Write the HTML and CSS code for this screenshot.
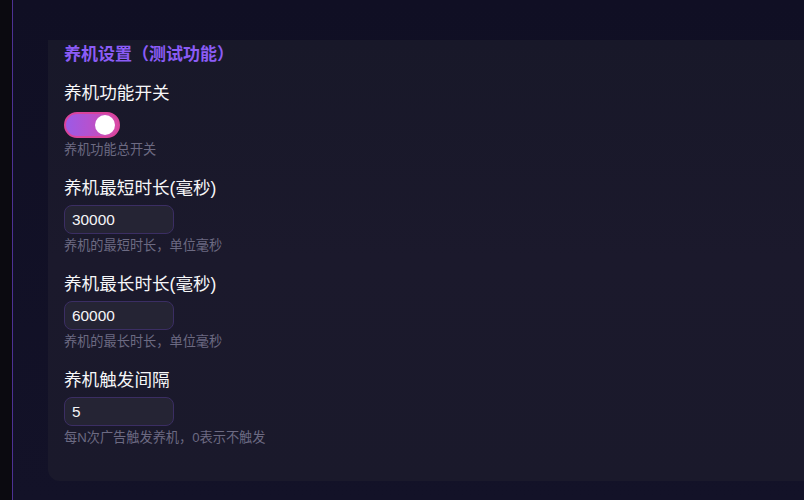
FILE: index.html
```html
<!DOCTYPE html>
<html lang="zh">
<head>
<meta charset="utf-8">
<link rel="stylesheet" href="styles.css">
</head>
<body>
<div class="app">
  <aside class="side"></aside>
  <main class="main">
    <section class="card">
      <h2 class="title">养机设置（测试功能）</h2>
      <div class="field">
        <div class="label">养机功能开关</div>
        <div class="toggle"><span class="knob"></span></div>
        <div class="hint">养机功能总开关</div>
      </div>
      <div class="field">
        <div class="label">养机最短时长(毫秒)</div>
        <div class="input">30000</div>
        <div class="hint">养机的最短时长，单位毫秒</div>
      </div>
      <div class="field">
        <div class="label">养机最长时长(毫秒)</div>
        <div class="input">60000</div>
        <div class="hint">养机的最长时长，单位毫秒</div>
      </div>
      <div class="field last">
        <div class="label">养机触发间隔</div>
        <div class="input">5</div>
        <div class="hint">每N次广告触发养机，0表示不触发</div>
      </div>
    </section>
  </main>
</div>
</body>
</html>
```
FILE: styles.css
```css
html, body {
  margin: 0;
  padding: 0;
  width: 804px;
  height: 500px;
  overflow: hidden;
  background: #121127;
  font-family: "Liberation Sans", "Noto Sans CJK SC", sans-serif;
}
.app {
  display: flex;
  height: 500px;
}
.side {
  width: 12px;
  flex: none;
  background: #0b0a10;
  border-right: 1px solid #4d3194;
}
.main {
  flex: 1;
  padding: 40px 0 0 35px;
  background: linear-gradient(180deg, #100f24 0%, #131228 100%);
  overflow: hidden;
}
.card {
  width: 820px;
  box-sizing: border-box;
  padding: 4px 16px 35px 16px;
  background: linear-gradient(180deg, #181829 0%, #1b192c 50%, #1a192b 100%);
  border-radius: 0 0 12px 12px;
}
.title {
  margin: 0 0 16px 0;
  font-size: 17px;
  line-height: 22px;
  font-weight: 700;
  color: #8b5cf6;
}
.field {
  margin-bottom: 19px;
}
.field.last { margin-bottom: 0; }
.label {
  font-size: 17.6px;
  line-height: 22px;
  color: #f6f6f8;
  margin-bottom: 6px;
}
.toggle {
  width: 56px;
  height: 26px;
  box-sizing: border-box;
  border-radius: 13px;
  border: 2px solid #d9449c;
  background: linear-gradient(90deg, #9c5ae6 0%, #b552cf 45%, #d94aa5 100%);
  display: flex;
  align-items: center;
  justify-content: flex-end;
  padding-right: 3px;
  margin-top: 8px;
  margin-bottom: 4px;
}
.knob {
  width: 20px;
  height: 20px;
  border-radius: 50%;
  background: #ffffff;
}
.input {
  width: 110px;
  height: 29px;
  box-sizing: border-box;
  border: 1px solid #3b2e63;
  border-radius: 8px;
  background: #252434;
  color: #f5f5f7;
  font-size: 15.4px;
  line-height: 27px;
  padding-left: 7px;
  margin-bottom: 4px;
}
.hint {
  font-size: 13.2px;
  line-height: 16px;
  color: #6c6a82;
}
```
